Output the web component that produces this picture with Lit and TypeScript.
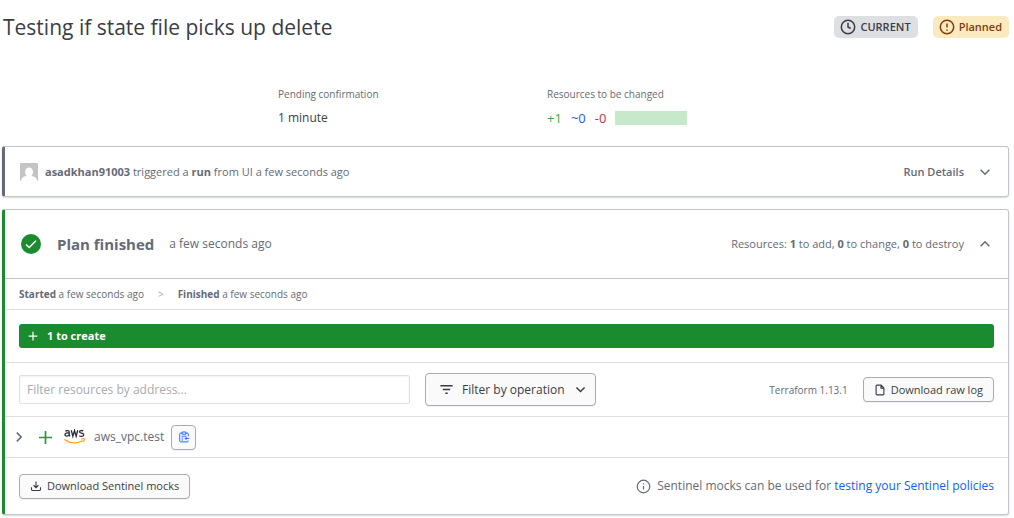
import { LitElement, html, css, svg } from "lit";
import { customElement, property } from "lit/decorators.js";

const icons: Record<string, unknown> = {
  clock: svg`<circle cx="8" cy="8" r="6.7"/><path d="M8 3.8V8l2.6 1.5"/>`,
  alert: svg`<circle cx="8" cy="8" r="6.7"/><path d="M8 4.4V8.4M8 10.600v1.200"/>`,
  info: svg`<circle cx="8" cy="8" r="6.7"/><path d="M8 7.4v3.8M8 4.600v1.200"/>`,
  down: svg`<path d="M3 5.5 8 10.5l5-5"/>`,
  up: svg`<path d="M3 10.5 8 5.5l5 5"/>`,
  right: svg`<path d="M5.5 3 10.5 8l-5 5"/>`,
  plus: svg`<path d="M8 1v14M1 8h14"/>`,
  filter: svg`<path d="M0.500 3.500h15M3.500 8h9M6.500 12.500h3"/>`,
  file: svg`<path d="M9.500 1.500H4A1.200 1.200 0 0 0 2.800 2.700v10.600A1.200 1.200 0 0 0 4 14.500h8a1.200 1.200 0 0 0 1.200-1.200V5.200L9.500 1.500zM9.300 1.800v3.700h3.800"/>`,
  download: svg`<path d="M8 2v8M4.700 7 8 10.200 11.300 7M2 9.500v3.300c0 .7.500 1.200 1.200 1.200h9.600c.7 0 1.200-.5 1.200-1.200V9.500"/>`,
  clipboard: svg`<path d="M5.500 2.800h-2A1.200 1.200 0 0 0 2.300 4v9.300a1.200 1.200 0 0 0 1.200 1.200h9a1.200 1.200 0 0 0 1.200-1.200V12.800M10.500 2.800h2A1.200 1.200 0 0 1 13.700 4v3M5.500 1.300h5v3h-5zM4.800 7h6.400M4.800 9.500h2M4.800 12h2M15 10H9.500M11.700 7.800 9.500 10l2.200 2.200"/>`,
};

@customElement("ui-icon")
class UiIcon extends LitElement {
  static styles = css`
    :host { display: inline-flex; flex: none; width: 16px; height: 16px; }
    svg { width: 100%; height: 100%; fill: none; stroke: currentColor; stroke-width: var(--stroke, 1.5); }
  `;
  @property() name = "";
  render() {
    return html`<svg viewBox="0 0 16 16" aria-hidden="true">${icons[this.name]}</svg>`;
  }
}

@customElement("app-root")
class AppRoot extends LitElement {
  static styles = css`
    * { box-sizing: border-box; }
    :host {
      display: block;
      padding: 12px 5px 4px 2px;
      font: 12px/20px "Segoe UI", "Open Sans", "Noto Sans", sans-serif;
      color: #656a76;
      background: #fff;
    }
    button, input { font: inherit; }
    b { font-weight: 700; }
    a { color: #1060ff; text-decoration: none; }
    .top { display: flex; align-items: center; gap: 15px; height: 30px; padding-left: 1px; }
    h1 { flex: 1; margin: 0; font-size: 21px; line-height: 30px; font-weight: 500; color: #3b3d45; }
    .badge {
      display: flex; align-items: center; gap: 4px; height: 22px; padding: 0 7px 0 6px;
      border-radius: 5px; background: #dedfe3; color: #3b3d45; font-size: 11px; font-weight: 600;
    }
    .badge.warn { background: #fbeabf; color: #803d0c; }
    .stats { display: grid; grid-template-columns: 269px 1fr; padding: 42px 0 0 276px; margin-bottom: 18px; }
    .stats dt { font-size: 10px; font-weight: 500; line-height: 20px; }
    .stats dd { display: flex; align-items: center; gap: 9px; margin: 4px 0 0; line-height: 20px; color: #3b3d45; }
    dl { margin: 0; }
    .amounts { font-size: 13px; }
    .add { color: #3fa648; }
    .change { color: #1c5cf0; }
    .destroy { color: #c4304a; }
    .bar { width: 72px; height: 14px; background: #c8e8cb; }
    .card {
      border: 1px solid #c2c5cb; border-left: 3px solid #656a76; border-radius: 3px;
      box-shadow: 0 1px 2px #656a7640;
    }
    .card + .card { margin-top: 12px; }
    .card.done { border-left-color: #1a8b2f; }
    .row { display: flex; align-items: center; padding: 0 14px; }
    .push { margin-left: auto; }
    .run { height: 49px; font-size: 11px; font-weight: 500; }
    .avatar { width: 18px; height: 18px; margin: 0 7px 0 1px; border-radius: 1px; }
    .toggle { display: flex; align-items: center; gap: 14px; padding: 0; border: 0; background: none; color: inherit; margin-right: 2px; font-size: 11px; font-weight: 500; }
    .toggle ui-icon { width: 14px; height: 14px; --stroke: 1.8; }
    .toggle.strong { font-weight: 600; }
    .head { height: 69px; border-bottom: 1px solid #c2c5cb; }
    .check { width: 20px; height: 20px; margin: 0 16px 0 2px; }
    h2 { margin: 0 15px 0 0; font-size: 15px; line-height: 20px; font-weight: 700; }
    .times { height: 31px; font-size: 10px; font-weight: 500; border-bottom: 1px solid #dedfe3; }
    .times i { font-style: normal; color: #a5a8b0; margin: 0 14px; }
    .summary { padding: 14px; border-bottom: 1px solid #dedfe3; }
    .create {
      display: flex; align-items: center; gap: 9px; height: 24px; padding: 0 9px;
      border-radius: 3px; background: #1a8b2f; color: #fff; font-size: 11px; font-weight: 700;
    }
    .create ui-icon { width: 10px; height: 10px; --stroke: 2; }
    .tools { height: 54px; border-bottom: 1px solid #dedfe3; }
    .field { flex: 0 1 391px; height: 29px; margin-right: 15px; padding: 0 7px; border: 1px solid #dedfe3; border-radius: 2px; box-shadow: inset 0 1px 2px #656a7618; outline: none; }
    .field::placeholder { color: #a9abb0; opacity: 1; }
    .btn {
      display: flex; align-items: center; gap: 5px; height: 25px; padding: 0 10px;
      border: 1px solid #a9abb1; border-radius: 4px; background: #fafafa; color: #3b3d45;
      box-shadow: 0 1px 1px #656a7618; white-space: nowrap; font-size: 11px; font-weight: 500;
    }
    .btn ui-icon { width: 12px; height: 12px; }
    .btn.large { height: 33px; padding: 0 8px 0 14px; gap: 9px; font-size: 12px; font-weight: 400; }
    .btn.large ui-icon { width: 13px; height: 13px; --stroke: 1.8; }
    .btn.square { width: 25px; padding: 0; justify-content: center; color: #1060ff; }
    .btn.square ui-icon { --stroke: 1.2; }
    .version { font-size: 10px; margin-right: 15px; }
    .resource { height: 41px; border-bottom: 1px solid #dedfe3; }
    .expand { display: flex; padding: 0; border: 0; background: none; color: inherit; margin: 0 12px 0 -7px; }
    .expand ui-icon { width: 14px; height: 14px; --stroke: 1.8; }
    .plus { width: 15px; height: 15px; color: #2b9440; --stroke: 1.8; }
    .aws { width: 21px; height: 16px; margin: 0 9px 0 11px; }
    .address { margin-right: 7px; font-weight: 500; }
    .foot { height: 56px; }
    .note { display: flex; align-items: center; gap: 6px; }
    .note ui-icon { width: 15px; height: 15px; --stroke: 1.3; }
  `;

  render() {
    return html`
      <header class="top">
        <h1>Testing if state file picks up delete</h1>
        <span class="badge"><ui-icon name="clock"></ui-icon>CURRENT</span>
        <span class="badge warn"><ui-icon name="alert"></ui-icon>Planned</span>
      </header>
      <dl class="stats">
        <div><dt>Pending confirmation</dt><dd>1 minute</dd></div>
        <div>
          <dt>Resources to be changed</dt>
          <dd class="amounts"><span class="add">+1</span><span class="change">~0</span><span class="destroy">-0</span><span class="bar"></span></dd>
        </div>
      </dl>
      <section class="card">
        <div class="row run">
          <svg class="avatar" viewBox="0 0 18 18" aria-hidden="true">
            <rect width="18" height="18" fill="#c4c4c4"/>
            <ellipse cx="9" cy="9" rx="4" ry="4.500" fill="#fff"/>
            <path d="M1 18c0-3 2-4.500 5.500-5h5c3.500.5 5.500 2 5.500 5z" fill="#fff"/>
          </svg>
          <span><b>asadkhan91003</b> triggered a <b>run</b> from UI a few seconds ago</span>
          <button class="toggle strong push">Run Details<ui-icon name="down"></ui-icon></button>
        </div>
      </section>
      <section class="card done">
        <div class="row head">
          <svg class="check" viewBox="0 0 20 20" aria-hidden="true">
            <circle cx="10" cy="10" r="10" fill="#1a8b2f"/>
            <path d="m5 10.500 3.200 3L15 6.800" fill="none" stroke="#fff" stroke-width="1.500"/>
          </svg>
          <h2>Plan finished</h2>
          <span>a few seconds ago</span>
          <button class="toggle push">
            <span>Resources: <b>1</b> to add, <b>0</b> to change, <b>0</b> to destroy</span><ui-icon name="up"></ui-icon>
          </button>
        </div>
        <div class="row times">
          <span><b>Started</b> a few seconds ago</span><i>&gt;</i><span><b>Finished</b> a few seconds ago</span>
        </div>
        <div class="summary"><div class="create"><ui-icon name="plus"></ui-icon>1 to create</div></div>
        <div class="row tools">
          <input class="field" type="text" aria-label="Filter resources by address" placeholder="Filter resources by address..." />
          <button class="btn large"><ui-icon name="filter"></ui-icon>Filter by operation<ui-icon name="down"></ui-icon></button>
          <span class="version push">Terraform 1.13.1</span>
          <button class="btn"><ui-icon name="file"></ui-icon>Download raw log</button>
        </div>
        <div class="row resource">
          <button class="expand" aria-label="Expand resource"><ui-icon name="right"></ui-icon></button>
          <ui-icon class="plus" name="plus"></ui-icon>
          <svg class="aws" viewBox="0 0 42 32" role="img" aria-label="aws">
            <g fill="none" stroke="#252f3e" stroke-width="2.600">
              <path d="M2.500 4.500C4 3 10.500 2 10.500 6v6.500l1.500 2M10.500 8C6 7.500 2 8 2 11.500c0 4 6.500 3.500 8.500-.5"/>
              <path d="m14.500 2.500 3.200 12L21 3l3.300 11.500 3.200-12"/>
              <path d="M38.500 4c-2-1.500-7.500-1.500-7.500 1.500 0 4 8.500 1.500 8.500 6 0 4-6.500 4-9 2"/>
            </g>
            <path d="M1 21c11 8 25 8.500 36 2.500M34 20c3-1 6-1 6.500-.3.500 1-.5 4-2.500 6" fill="none" stroke="#f90" stroke-width="2.400"/>
          </svg>
          <span class="address">aws_vpc.test</span>
          <button class="btn square" aria-label="Copy address"><ui-icon name="clipboard"></ui-icon></button>
        </div>
        <div class="row foot">
          <button class="btn"><ui-icon name="download"></ui-icon>Download Sentinel mocks</button>
          <span class="note push"><ui-icon name="info"></ui-icon><span>Sentinel mocks can be used for <a href="#">testing your Sentinel policies</a></span></span>
        </div>
      </section>
    `;
  }
}
